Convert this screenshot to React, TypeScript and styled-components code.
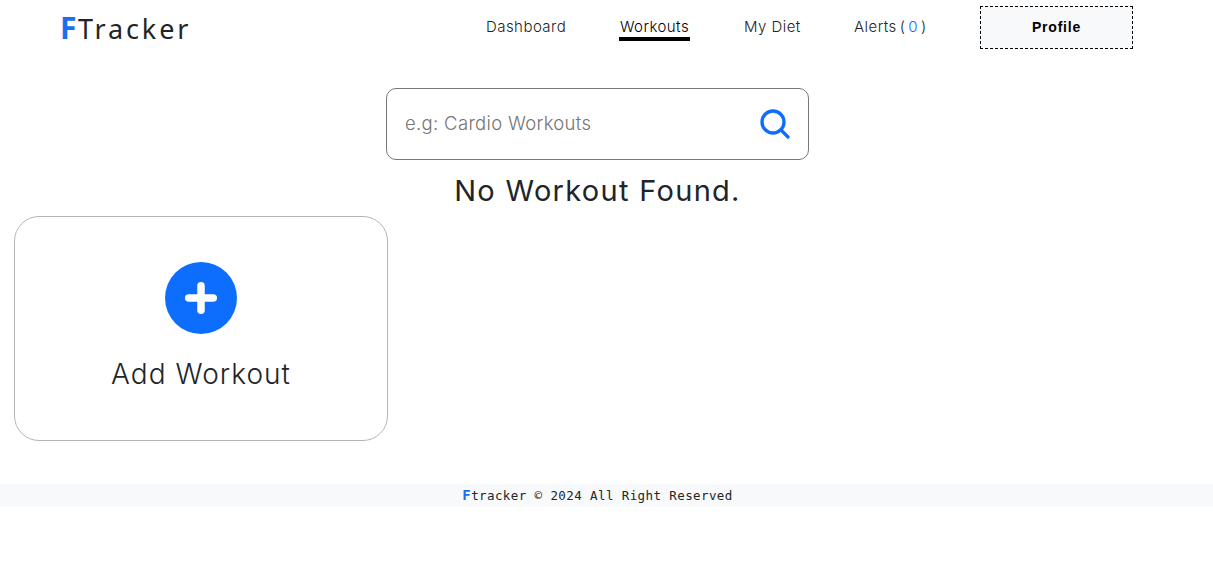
import React from "react";
import styled, { createGlobalStyle } from "styled-components";

const Global = createGlobalStyle`
  html, body { margin: 0; padding: 0; background: #fff; }
  body { font-family: Inter, "Liberation Sans", sans-serif; color: #212529; }
`;

const Page = styled.div`
  display: flex;
  flex-direction: column;
  width: 1213px;
  height: 576px;
  overflow: hidden;
`;

const Header = styled.header`
  display: flex;
  align-items: center;
  height: 55px;
  padding: 0 80px 0 60px;
`;

const Logo = styled.div`
  font-family: "Noto Sans", sans-serif;
  font-size: 27px;
  font-weight: 400;
  letter-spacing: 2.9px;
  color: #212529;
  line-height: 51px;
  margin-right: auto;
`;

const LogoMark = styled.span`
  color: #1a6ef0;
  font-weight: 700;
  font-size: 30px;
  letter-spacing: 1.4px;
`;

const Nav = styled.nav`
  display: flex;
  align-items: center;
`;

const NavLink = styled.a<{ $active?: boolean; $w: number; $tightWords?: boolean }>`
  width: ${(p) => p.$w}px;
  margin-right: 54px;
  box-sizing: border-box;
  text-align: center;
  white-space: nowrap;
  font-size: 15px;
  font-weight: 300;
  letter-spacing: 0.45px;
  word-spacing: ${(p) => (p.$tightWords ? "-1.7px" : "0")};
  line-height: 20px;
  color: ${(p) => (p.$active ? "#000" : "#212529")};
  border-bottom: 4px solid ${(p) => (p.$active ? "#000" : "transparent")};
  padding-top: 2px;
`;

const Count = styled.span`
  color: #0d6efd;
`;

const ProfileButton = styled.button`
  width: 153px;
  height: 43px;
  background: #f8f9fa;
  border: 1px dashed #000;
  font-family: "Liberation Sans", sans-serif;
  font-weight: 700;
  font-size: 14px;
  letter-spacing: 0.8px;
  color: #000;
  margin-top: -1px;
`;

const Main = styled.main`
  display: flex;
  flex-direction: column;
  padding-top: 33px;
`;

const SearchBox = styled.div`
  align-self: center;
  width: 423px;
  height: 72px;
  box-sizing: border-box;
  border: 1px solid #777;
  border-radius: 10px;
  display: flex;
  align-items: center;
  justify-content: space-between;
  padding: 0 18px;
  margin-left: -18px;
`;

const Placeholder = styled.span`
  font-size: 18.5px;
  font-weight: 300;
  letter-spacing: 0.32px;
  color: #757575;
  margin-top: -2px;
`;

const Heading = styled.h2`
  margin: 14px 0 0;
  text-align: center;
  font-size: 29px;
  font-weight: 400;
  line-height: 34px;
  color: #212529;
  padding-right: 18px;
  letter-spacing: 1.3px;
`;

const Card = styled.div`
  margin: 8px 0 0 14px;
  width: 374px;
  height: 225px;
  box-sizing: border-box;
  border: 1px solid #b5b5b5;
  border-radius: 25px;
  display: flex;
  flex-direction: column;
  align-items: center;
  padding-top: 45px;
`;

const CardTitle = styled.div`
  margin-top: 22px;
  font-size: 28px;
  font-weight: 300;
  line-height: 36px;
  letter-spacing: 1.05px;
  color: #212529;
`;

const Footer = styled.footer`
  margin-top: 43px;
  height: 23px;
  background: #f8f9fa;
  display: flex;
  align-items: center;
  justify-content: center;
  padding-right: 18px;
  font-family: "DejaVu Sans Mono", monospace;
  font-size: 12.5px;
  letter-spacing: 0.4px;
  color: #212529;
  line-height: 23px;
  white-space: pre;
`;

const FooterMark = styled.span`
  color: #1a6ef0;
  font-weight: 700;
  font-size: 14px;
`;

const Search = () => (
  <svg width="30" height="30" viewBox="0 0 30 30" fill="none" stroke="#0d6efd" strokeWidth="3.3" strokeLinecap="round">
    <circle cx="13" cy="13" r="11" />
    <path d="M21.5 21.5 L28 28" />
  </svg>
);

const Plus = () => (
  <svg width="72" height="72" viewBox="0 0 72 72">
    <circle cx="36" cy="36" r="36" fill="#0d6efd" />
    <path d="M36 23.75 V48.25 M23.75 36 H48.25" stroke="#fff" strokeWidth="7.5" strokeLinecap="round" />
  </svg>
);

export default function App() {
  return (
    <Page>
      <Global />
      <Header>
        <Logo><LogoMark>F</LogoMark>Tracker</Logo>
        <Nav>
          <NavLink $w={79}>Dashboard</NavLink>
          <NavLink $w={71} $active>Workouts</NavLink>
          <NavLink $w={56}>My Diet</NavLink>
          <NavLink $w={72} $tightWords>Alerts ( <Count>0</Count> )</NavLink>
          <ProfileButton>Profile</ProfileButton>
        </Nav>
      </Header>
      <Main>
        <SearchBox>
          <Placeholder>e.g: Cardio Workouts</Placeholder>
          <Search />
        </SearchBox>
        <Heading>No Workout Found.</Heading>
        <Card>
          <Plus />
          <CardTitle>Add Workout</CardTitle>
        </Card>
      </Main>
      <Footer><FooterMark>F</FooterMark>tracker © 2024 All Right Reserved</Footer>
    </Page>
  );
}
